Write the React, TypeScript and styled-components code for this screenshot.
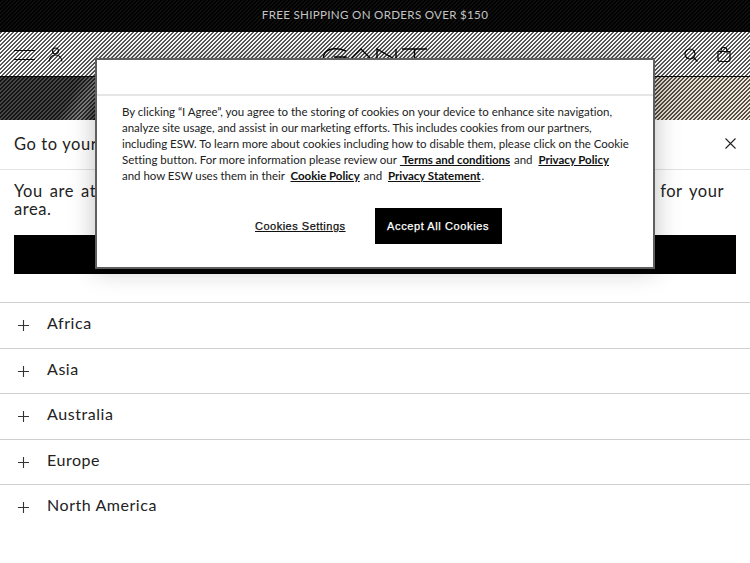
import styled, { createGlobalStyle } from 'styled-components';

const GlobalStyle = createGlobalStyle`
  html, body {
    margin: 0;
    padding: 0;
    background: #fff;
    overflow: hidden;
  }
  * {
    box-sizing: border-box;
  }
`;

const Page = styled.div`
  position: relative;
  width: 750px;
  height: 563px;
  overflow: hidden;
  font-family: Lato, "Liberation Sans", sans-serif;
  color: #222;
`;

const Top = styled.div`
  position: relative;
  height: 120px;
`;

const Stripes = styled.div`
  position: absolute;
  inset: 0;
  background-image: linear-gradient(
    135deg,
    rgba(0, 0, 0, 0.65) 25%,
    rgba(255, 255, 255, 0.06) 25%,
    rgba(255, 255, 255, 0.06) 50%,
    rgba(0, 0, 0, 0.65) 50%,
    rgba(0, 0, 0, 0.65) 75%,
    rgba(255, 255, 255, 0.06) 75%
  );
  background-size: 4px 4px;
`;

const Announcement = styled.div`
  height: 32px;
  padding-bottom: 4px;
  background: #000;
  display: flex;
  align-items: center;
  justify-content: center;
  font-size: 11.6px;
  letter-spacing: 0.3px;
`;

const AnnouncementText = styled.span`
  position: relative;
  z-index: 1;
  color: #c4c4c4;
`;

const Header = styled.header`
  height: 44px;
  background: #fff;
  display: flex;
  align-items: flex-start;
  justify-content: space-between;
  padding: 15px 19px 0 14px;
`;

const IconGroup = styled.div`
  display: flex;
  align-items: center;
  gap: ${(p: { $gap: number }) => p.$gap}px;
`;

const Logo = styled.svg`
  position: absolute;
  left: 322px;
  top: 47px;
`;

const Hero = styled.div`
  height: 44px;
  border-top: 1px solid #000;
  background:
    linear-gradient(120deg, transparent 70px, rgba(255, 255, 255, 0.35) 88px, transparent 104px),
    linear-gradient(90deg, #3a3a3a 0, #3a3a3a 90px, #8a8a8a 400px, #e9dfcf 690px, #f4e8d8 750px);
`;

const Drawer = styled.section`
  background: #fff;
`;

const DrawerHead = styled.div`
  height: 50px;
  border-bottom: 1px solid #e3e3e3;
  display: flex;
  align-items: center;
  justify-content: space-between;
  padding: 0 14px 2px;
  font-size: 16.5px;
  letter-spacing: 0.6px;
`;

const Message = styled.p`
  margin: 12px 14px 17px;
  font-size: 16.5px;
  line-height: 18px;
  letter-spacing: 0.55px;
`;

const MessageLine = styled.span`
  display: block;
  width: 710px;
  text-align-last: justify;
  white-space: nowrap;
`;

const SelectButton = styled.button`
  display: block;
  width: 722px;
  height: 39px;
  margin: 0 14px 28px;
  border: 0;
  background: #000;
  color: #fff;
  font: inherit;
`;

const RegionRow = styled.div`
  height: 45.5px;
  border-top: 1px solid #cfcfcf;
  display: flex;
  align-items: center;
  gap: 18px;
  padding-left: 18px;
  font-size: 16px;
  letter-spacing: 0.55px;
`;

const RegionName = styled.span`
  margin-bottom: 5px;
`;

const Plus = styled.svg`
  flex: none;
  margin-top: 1px;
`;

const Consent = styled.div`
  position: absolute;
  left: 95px;
  top: 58px;
  width: 560px;
  height: 211px;
  background: #fff;
  border: 2px solid #5f5f5f;
  box-shadow: 0 0 24px rgba(0, 0, 0, 0.25);
`;

const ConsentTop = styled.div`
  height: 36px;
  border-bottom: 2px solid #e6e6e6;
`;

const ConsentText = styled.p`
  margin: 0;
  padding: 8px 0 0 25px;
  font-size: 11.5px;
  line-height: 16px;
  letter-spacing: -0.03px;
  white-space: nowrap;
  color: #222;
`;

const PolicyLink = styled.a`
  margin: 0 1px 0 3px;
  color: #111;
  font-weight: 700;
  text-decoration: underline;
`;

const ConsentActions = styled.div`
  display: flex;
  align-items: center;
  margin: 24px 0 0 158px;
  gap: 29px;
`;

const SettingsButton = styled.button`
  border: 0;
  padding: 0;
  background: none;
  color: #111;
  font-family: "Liberation Sans", Arial, sans-serif;
  font-size: 11px;
  letter-spacing: 0.5px;
  -webkit-text-stroke: 0.25px currentColor;
  text-decoration: underline;
`;

const AcceptButton = styled.button`
  width: 127px;
  height: 36px;
  padding: 0;
  border: 0;
  background: #000;
  color: #fff;
  white-space: nowrap;
  font-family: "Liberation Sans", Arial, sans-serif;
  font-size: 11px;
  letter-spacing: 0.6px;
  -webkit-text-stroke: 0.25px currentColor;
`;

const regions = ['Africa', 'Asia', 'Australia', 'Europe', 'North America'];

export default function App() {
  return (
    <Page>
      <GlobalStyle />
      <Top>
        <Announcement>
          <AnnouncementText>FREE SHIPPING ON ORDERS OVER $150</AnnouncementText>
        </Announcement>
        <Header>
          <IconGroup $gap={13}>
            <svg width="21" height="13" viewBox="0 0 21 13" fill="none" stroke="#000" strokeWidth="1.2">
              <path d="M0 2.500h21M0 11.500h21" />
            </svg>
            <svg width="15" height="15" viewBox="0 0 15 15" fill="none" stroke="#000" strokeWidth="1.2">
              <circle cx="7.500" cy="4" r="3" />
              <path d="M1 14.500c.6-4 3-6.500 6.500-6.500S13.400 10.500 14 14.500" />
            </svg>
          </IconGroup>
          <Logo width="106" height="14" viewBox="0 0 106 14" fill="none" stroke="#000" strokeWidth="1.4">
            <path d="M24 4C19 2 14 1.500 10 2 4 3 1 7 1 13M12 10h12v3" />
            <path d="M28 13 39 2l11 11" />
            <path d="M55 13V2l19 11V2" />
            <path d="M80 2h25M92.500 2v12" />
          </Logo>
          <IconGroup $gap={19}>
            <svg width="14" height="14" viewBox="0 0 14 14" fill="none" stroke="#000" strokeWidth="1.2">
              <circle cx="6" cy="6" r="5" />
              <path d="M9.500 9.500l4 4" />
            </svg>
            <svg width="14" height="15" viewBox="0 0 14 15" fill="none" stroke="#000" strokeWidth="1.2">
              <path d="M1 4.500h12v8a2 2 0 0 1-2 2H3a2 2 0 0 1-2-2z" />
              <path d="M4 6.500V3.500a3 3 0 0 1 6 0v3" />
            </svg>
          </IconGroup>
        </Header>
        <Hero />
        <Stripes />
      </Top>
      <Drawer>
        <DrawerHead>
          <span>Go to your local site</span>
          <svg width="11" height="11" viewBox="0 0 11 11" fill="none" stroke="#222" strokeWidth="1.1">
            <path d="M.5.500l10 10M10.500.500l-10 10" />
          </svg>
        </DrawerHead>
        <Message>
          <MessageLine>You are at the wrong site for your location. Please select the correct shop here for your</MessageLine>
          area.
        </Message>
        <SelectButton>Continue</SelectButton>
        {regions.map((region) => (
          <RegionRow key={region}>
            <Plus width="11" height="11" viewBox="0 0 11 11" fill="none" stroke="#333" strokeWidth="1.1">
              <path d="M5.500 0v11M0 5.500h11" />
            </Plus>
            <RegionName>{region}</RegionName>
          </RegionRow>
        ))}
      </Drawer>
      <Consent>
        <ConsentTop />
        <ConsentText>
          By clicking “I Agree”, you agree to the storing of cookies on your device to enhance site navigation,<br />
          analyze site usage, and assist in our marketing efforts. This includes cookies from our partners,<br />
          including ESW. To learn more about cookies including how to disable them, please click on the Cookie<br />
          Setting button. For more information please review our
          <PolicyLink> Terms and conditions</PolicyLink> and <PolicyLink> Privacy Policy</PolicyLink><br />
          and how ESW uses them in their <PolicyLink> Cookie Policy</PolicyLink> and <PolicyLink> Privacy Statement</PolicyLink>.
        </ConsentText>
        <ConsentActions>
          <SettingsButton>Cookies Settings</SettingsButton>
          <AcceptButton>Accept All Cookies</AcceptButton>
        </ConsentActions>
      </Consent>
    </Page>
  );
}
